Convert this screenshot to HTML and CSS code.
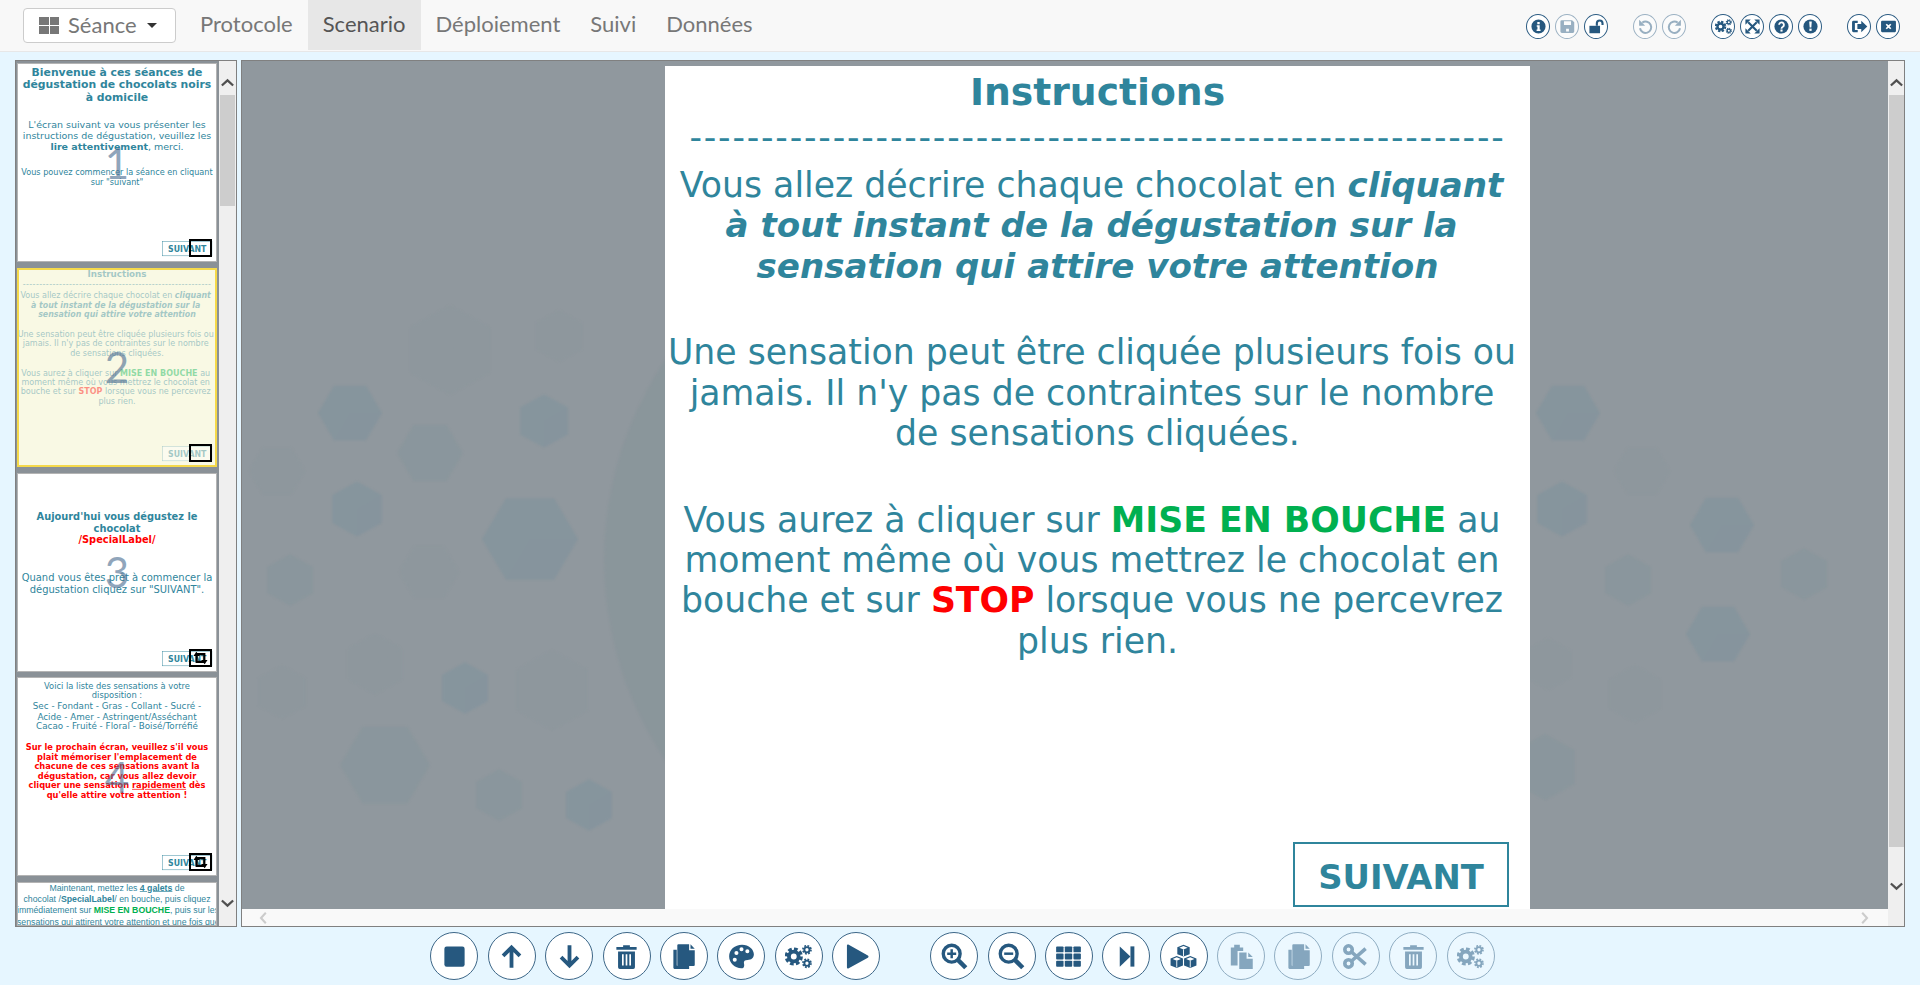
FILE: index.html
```html
<!DOCTYPE html>
<html lang="fr">
<head>
  <meta charset="UTF-8" />
  <title>Scenario</title>
  <link rel="stylesheet" href="styles.css">
</head>
<body>

  <svg class="defs" width="0" height="0">
    <defs>
      <symbol id="i-info" viewBox="0 0 24 24"><path fill-rule="evenodd" d="M12 2a10 10 0 1 0 0 20a10 10 0 1 0 0-20z M10.3 5.500h3.400v3.200h-3.400z M9.500 10.200h4.200v6.200h1.200v2h-5.600v-2h1.200v-4.200h-1z"/></symbol>
      <symbol id="i-save" viewBox="0 0 24 24"><path fill-rule="evenodd" d="M4 3h14.500l3 3v13a2 2 0 0 1-2 2h-15.500a2 2 0 0 1-2-2v-14a2 2 0 0 1 2-2z M7 4.500v5.500h10v-5.500z M10 15v4h4v-4z"/></symbol>
      <symbol id="i-unlock" viewBox="0 0 24 24"><path d="M2 11h15v10.500h-15z"/><path d="M12.500 11v-3.500a4 4 0 0 1 8 0v2.500" fill="none" stroke="currentColor" stroke-width="3"/></symbol>
      <symbol id="i-undo" viewBox="0 0 24 24"><path d="M7.500 6.500a8 8 0 1 1-3.300 8" fill="none" stroke="currentColor" stroke-width="2.800"/><path d="M3 2.500v8.500h8.500z"/></symbol>
      <symbol id="i-redo" viewBox="0 0 24 24"><path d="M16.500 6.500a8 8 0 1 0 3.300 8" fill="none" stroke="currentColor" stroke-width="2.800"/><path d="M21 2.500v8.500h-8.500z"/></symbol>
      <symbol id="i-cogs" viewBox="0 0 24 24">
        <g fill="none" stroke="currentColor">
          <circle cx="7.800" cy="12" r="4.300" stroke-width="3.400"/>
          <circle cx="7.800" cy="12" r="6.700" stroke-width="2.800" stroke-dasharray="3.300 1.960"/>
          <circle cx="19.500" cy="6" r="2.300" stroke-width="1.700"/>
          <circle cx="19.500" cy="6" r="3.600" stroke-width="1.500" stroke-dasharray="1.600 1.230"/>
          <circle cx="19.500" cy="18" r="2.300" stroke-width="1.700"/>
          <circle cx="19.500" cy="18" r="3.600" stroke-width="1.500" stroke-dasharray="1.600 1.230"/>
        </g>
      </symbol>
      <symbol id="i-full" viewBox="0 0 24 24"><path d="M6 6l12 12M18 6l-12 12" stroke="currentColor" stroke-width="3" fill="none"/><path d="M2 2h7.500l-7.500 7.500z M22 2h-7.500l7.500 7.500z M2 22h7.500l-7.500-7.500z M22 22h-7.500l7.500-7.500z"/></symbol>
      <symbol id="i-help" viewBox="0 0 24 24"><circle cx="12" cy="12" r="10"/><path d="M8.600 9.500a3.400 3.400 0 1 1 5.300 2.900c-1.300.8-1.900 1.300-1.900 2.600" fill="none" stroke="#fff" stroke-width="2.600"/><rect x="10.500" y="16.200" width="3" height="3" fill="#fff"/></symbol>
      <symbol id="i-warn" viewBox="0 0 24 24"><circle cx="12" cy="12" r="10"/><path d="M10.200 5h3.600l-.6 8.500h-2.400z" fill="#fff"/><rect x="10.400" y="15" width="3.200" height="3.200" fill="#fff"/></symbol>
      <symbol id="i-logout" viewBox="0 0 24 24"><path d="M3.500 4h6v3h-4v10h4v3h-6a2 2 0 0 1-2-2v-12a2 2 0 0 1 2-2z"/><path d="M9 8.500h5.500v-4.500l8.500 8-8.500 8v-4.500h-5.500z"/></symbol>
      <symbol id="i-close" viewBox="0 0 24 24"><path fill-rule="evenodd" d="M3 4h18a1.500 1.500 0 0 1 1.500 1.500v13a1.500 1.500 0 0 1-1.500 1.500h-18a1.500 1.500 0 0 1-1.500-1.500v-13a1.500 1.500 0 0 1 1.500-1.500z M9.600 8l-1.600 1.600 2.400 2.400-2.400 2.400 1.600 1.600 2.400-2.400 2.400 2.400 1.600-1.600-2.400-2.400 2.400-2.400-1.600-1.600-2.400 2.400z"/></symbol>
      <symbol id="i-stop" viewBox="0 0 24 24"><rect x="3" y="3" width="18" height="18" rx="2"/></symbol>
      <symbol id="i-up" viewBox="0 0 24 24"><path d="M12 22v-17M4.500 11.500l7.500-7.500 7.500 7.500" fill="none" stroke="currentColor" stroke-width="3.400"/></symbol>
      <symbol id="i-down" viewBox="0 0 24 24"><path d="M12 2v17M4.500 12.500l7.500 7.500 7.500-7.500" fill="none" stroke="currentColor" stroke-width="3.400"/></symbol>
      <symbol id="i-trash" viewBox="0 0 24 24"><path d="M3 3.500h6v-1.500h6v1.500h6v2.500h-18z"/><path fill-rule="evenodd" d="M4.500 7.500h15v14a1.500 1.500 0 0 1-1.500 1.500h-12a1.500 1.500 0 0 1-1.500-1.500z M8 10v10h1.500v-10z M11.250 10v10h1.500v-10z M14.500 10v10h1.500v-10z"/></symbol>
      <symbol id="i-copy" viewBox="0 0 24 24"><path d="M3 6h3v14h11v3h-13a1 1 0 0 1-1-1z"/><path d="M7.500 1h9.500v5.500h5v13a1 1 0 0 1-1 1h-13.500a1 1 0 0 1-1-1v-17.500a1 1 0 0 1 1-1z"/><path d="M18.200 1l3.800 4.200h-3.800z"/></symbol>
      <symbol id="i-palette" viewBox="0 0 24 24"><path fill-rule="evenodd" d="M12.500 1.500c6 0 10.500 4 10.500 8.500 0 3.500-2.500 5-5.500 5-2.500 0-3.800 1-3.300 3.200.5 2 .2 4.300-2.200 4.300-6 0-11-4.800-11-10.700 0-5.800 5-10.300 11.500-10.300z M7.500 7a1.800 1.800 0 1 0 0 3.600a1.800 1.800 0 1 0 0-3.600z M12 3.800a1.800 1.800 0 1 0 0 3.600a1.800 1.800 0 1 0 0-3.600z M17.200 5.500a1.800 1.800 0 1 0 0 3.600a1.800 1.800 0 1 0 0-3.600z M6 13a1.800 1.800 0 1 0 0 3.600a1.800 1.800 0 1 0 0-3.600z"/></symbol>
      <symbol id="i-play" viewBox="0 0 24 24"><path d="M3.500 2.500c0-1 .8-1.300 1.600-.9l17 9.400c.8.500.8 1.500 0 2l-17 9.400c-.8.400-1.600.1-1.600-.9z"/></symbol>
      <symbol id="i-zoomin" viewBox="0 0 24 24"><circle cx="9.500" cy="9.500" r="7.500" fill="none" stroke="currentColor" stroke-width="3"/><path d="M15 15l7 7" stroke="currentColor" stroke-width="4"/><path d="M9.500 5.500v8M5.500 9.500h8" stroke="currentColor" stroke-width="2.200"/></symbol>
      <symbol id="i-zoomout" viewBox="0 0 24 24"><circle cx="9.500" cy="9.500" r="7.500" fill="none" stroke="currentColor" stroke-width="3"/><path d="M15 15l7 7" stroke="currentColor" stroke-width="4"/><path d="M5.500 9.500h8" stroke="currentColor" stroke-width="2.200"/></symbol>
      <symbol id="i-grid" viewBox="0 0 24 24"><g><rect x="1" y="3" width="6.600" height="5.300" rx=".8"/><rect x="8.700" y="3" width="6.600" height="5.300" rx=".8"/><rect x="16.400" y="3" width="6.600" height="5.300" rx=".8"/><rect x="1" y="9.350" width="6.600" height="5.300" rx=".8"/><rect x="8.700" y="9.350" width="6.600" height="5.300" rx=".8"/><rect x="16.400" y="9.350" width="6.600" height="5.300" rx=".8"/><rect x="1" y="15.700" width="6.600" height="5.300" rx=".8"/><rect x="8.700" y="15.700" width="6.600" height="5.300" rx=".8"/><rect x="16.400" y="15.700" width="6.600" height="5.300" rx=".8"/></g></symbol>
      <symbol id="i-end" viewBox="0 0 24 24"><path d="M6 3l9.500 9-9.500 9z"/><path d="M15.500 3h3.500v18h-3.500z"/></symbol>
      <symbol id="i-cubes" viewBox="0 0 24 24">
        <path d="M12 1.500l5.500 2.200v6.200l-5.500 2.200-5.500-2.200v-6.200z M6 11.500l5.500 2.200v6.200l-5.500 2.400-5.500-2.400v-6.200z M18 11.500l5.500 2.200v6.200l-5.500 2.400-5.500-2.400v-6.200z"/>
        <path d="M12 2.700l3.700 1.500-3.700 1.500-3.700-1.500z M6 12.700l3.700 1.500-3.700 1.500-3.700-1.500z M18 12.700l3.700 1.500-3.700 1.500-3.700-1.500z" fill="#fff"/>
        <path d="M12 5.700v6M6 15.700v6M18 15.700v6" fill="none" stroke="#fff" stroke-width=".8"/>
      </symbol>
      <symbol id="i-paste" viewBox="0 0 24 24"><path d="M2.500 4h3v-2.500h5v2.500h3v3h-5v13h-6z"/><path d="M10 8.500h6.500v5.500h5.500v9h-12z"/><path d="M18 8.500l4 4h-4z"/></symbol>
      <symbol id="i-cut" viewBox="0 0 24 24"><g fill="none" stroke="currentColor" stroke-width="3.200"><circle cx="5.800" cy="5.800" r="3.300"/><circle cx="5.800" cy="18.200" r="3.300"/><path d="M8.500 8l12.500 11M8.500 16l12.500-11"/></g></symbol>
      <symbol id="i-retweet" viewBox="0 0 24 20"><path d="M6 1l5 6h-3v7h8l3 3h-14v-10h-3z M18 19l-5-6h3v-7h-8l-3-3h14v10h3z"/></symbol>
      <symbol id="i-chev-up" viewBox="0 0 15 10"><path d="M1 8.500l6.500-6 6.500 6" fill="none" stroke="currentColor" stroke-width="2.600"/></symbol>
      <symbol id="i-chev-down" viewBox="0 0 15 10"><path d="M1 1.500l6.500 6 6.500-6" fill="none" stroke="currentColor" stroke-width="2.600"/></symbol>
      <symbol id="i-chev-left" viewBox="0 0 10 15"><path d="M8.500 1l-6 6.500 6 6.500" fill="none" stroke="currentColor" stroke-width="2.600"/></symbol>
      <symbol id="i-chev-right" viewBox="0 0 10 15"><path d="M1.500 1l6 6.500-6 6.500" fill="none" stroke="currentColor" stroke-width="2.600"/></symbol>
      <symbol id="hex" viewBox="-1 -1 2 2" overflow="visible">
        <path d="M-.5-.85L.5-.85 1 0 .5.85-.5.85-1 0z"/>
        <path d="M0 0L1 0 .5.85-.5.85z" opacity=".4"/>
      </symbol>
      <symbol id="hex-b" viewBox="-1 -1 2 2" overflow="visible">
        <path d="M0-.95L.85-.48 .85.48 0 .95-.85.48-.85-.48z"/>
        <path d="M0 0L.85-.48 .85.48 0 .95z" opacity=".4"/>
      </symbol>
    </defs>
  </svg>

  <!-- top bar -->
  <header class="topbar">
    <button class="session-btn">
      <span class="session-grid"><i></i><i></i><i></i><i></i></span>
      Séance
      <span class="caret"></span>
    </button>
    <nav class="tabs">
      <a>Protocole</a>
      <a class="active">Scenario</a>
      <a>Déploiement</a>
      <a>Suivi</a>
      <a>Données</a>
    </nav>
    <div class="top-tools">
      <div class="tool-group">
        <span class="tool"><svg><use href="#i-info"/></svg></span>
        <span class="tool off"><svg><use href="#i-save"/></svg></span>
        <span class="tool"><svg><use href="#i-unlock"/></svg></span>
      </div>
      <div class="tool-group">
        <span class="tool off"><svg><use href="#i-undo"/></svg></span>
        <span class="tool off"><svg><use href="#i-redo"/></svg></span>
      </div>
      <div class="tool-group">
        <span class="tool"><svg><use href="#i-cogs"/></svg></span>
        <span class="tool"><svg><use href="#i-full"/></svg></span>
        <span class="tool"><svg><use href="#i-help"/></svg></span>
        <span class="tool"><svg><use href="#i-warn"/></svg></span>
      </div>
      <div class="tool-group">
        <span class="tool"><svg><use href="#i-logout"/></svg></span>
        <span class="tool"><svg><use href="#i-close"/></svg></span>
      </div>
    </div>
  </header>

  <div class="workspace">

    <!-- thumbnails -->
    <aside class="rail">
      <div class="thumbs">

        <div class="thumb">
          <div class="mini">
            <div class="slide s-welcome">
              <h3>Bienvenue à ces séances de<br>dégustation de chocolats noirs<br>à domicile</h3>
              <p class="big">L'écran suivant va vous présenter les<br>instructions de dégustation, veuillez les<br><b>lire attentivement</b>, merci.</p>
              <p class="small">Vous pouvez commencer la séance en cliquant<br>sur "suivant"</p>
              <div class="next">SUIVANT</div>
            </div>
          </div>
          <span class="thumb-num">1</span>
          <span class="thumb-flag"></span>
        </div>

        <div class="thumb selected">
          <div class="mini">
            <div class="slide s-main">
              <h2>Instructions</h2>
              <div class="dashes">---------------------------------------------------------</div>
              <p>Vous allez décrire chaque chocolat en <b><i>cliquant&nbsp;<br>à tout instant de la dégustation sur la&nbsp;<br>sensation qui attire votre attention</i></b></p>
              <p>Une sensation peut être cliquée plusieurs fois ou&nbsp;<br>jamais. Il n'y pas de contraintes sur le nombre&nbsp;<br>de sensations cliquées.</p>
              <p>Vous aurez à cliquer sur <b class="green">MISE EN BOUCHE</b> au&nbsp;<br>moment même où vous mettrez le chocolat en&nbsp;<br>bouche et sur <b class="red">STOP</b> lorsque vous ne percevrez&nbsp;<br>plus rien.</p>
              <div class="next">SUIVANT</div>
            </div>
          </div>
          <span class="thumb-num">2</span>
          <span class="thumb-flag"></span>
        </div>

        <div class="thumb">
          <div class="mini">
            <div class="slide s-today">
              <h3>Aujourd'hui vous dégustez le<br>chocolat<br><span class="red">/SpecialLabel/</span></h3>
              <p>Quand vous êtes prêt à commencer la<br>dégustation cliquez sur "SUIVANT".</p>
              <div class="next">SUIVANT</div>
            </div>
          </div>
          <span class="thumb-num">3</span>
          <span class="thumb-flag"><svg><use href="#i-retweet"/></svg></span>
        </div>

        <div class="thumb">
          <div class="mini">
            <div class="slide s-list">
              <p class="intro">Voici la liste des sensations à votre<br>disposition :</p>
              <p class="words">Sec - Fondant - Gras - Collant - Sucré -<br>Acide - Amer - Astringent/Asséchant<br>Cacao - Fruité - Floral - Boisé/Torréfié</p>
              <p class="warning">Sur le prochain écran, veuillez s'il vous<br>plait mémoriser l'emplacement de<br>chacune de ces sensations avant la<br>dégustation, car vous allez devoir<br>cliquer une sensation <u>rapidement</u> dès<br>qu'elle attire votre attention !</p>
              <div class="next">SUIVANT</div>
            </div>
          </div>
          <span class="thumb-num">4</span>
          <span class="thumb-flag"><svg><use href="#i-retweet"/></svg></span>
        </div>

        <div class="thumb">
          <div class="mini">
            <div class="slide s-last">
              <p>Maintenant, mettez les <u><b>4 galets</b></u> de<br>chocolat /<b>SpecialLabel</b>/ en bouche, puis cliquez<br>immédiatement sur <b class="green">MISE EN BOUCHE</b>, puis sur les<br>sensations qui attirent votre attention et une fois que</p>
            </div>
          </div>
        </div>

      </div>
      <div class="vbar">
        <svg class="chev"><use href="#i-chev-up"/></svg>
        <div class="vbar-thumb rail-thumb"></div>
        <svg class="chev chev-end"><use href="#i-chev-down"/></svg>
      </div>
    </aside>

    <!-- main slide -->
    <main class="stage">
      <div class="canvas">
        <svg class="backdrop" viewBox="242 61 1646 848">
          <circle class="arc" cx="962" cy="560" r="358"/>
          <g class="hex-strong">
            <use href="#hex" x="318" y="381" width="64" height="64"/>
            <use href="#hex-b" x="516" y="393" width="56" height="56"/>
            <use href="#hex-b" x="328" y="480" width="58" height="58"/>
            <use href="#hex" x="482" y="491" width="96" height="96"/>
            <use href="#hex-b" x="438" y="661" width="54" height="54"/>
            <use href="#hex-b" x="562" y="778" width="54" height="54"/>
            <use href="#hex" x="1536" y="381" width="64" height="64"/>
            <use href="#hex-b" x="1533" y="480" width="58" height="58"/>
            <use href="#hex" x="1690" y="493" width="64" height="64"/>
            <use href="#hex" x="1686" y="602" width="64" height="64"/>
          </g>
          <g class="hex-mid">
            <use href="#hex-b" x="263" y="553" width="54" height="54"/>
            <use href="#hex" x="397" y="420" width="66" height="66"/>
            <use href="#hex" x="340" y="720" width="90" height="90"/>
            <use href="#hex-b" x="472" y="768" width="54" height="54"/>
            <use href="#hex-b" x="1601" y="553" width="54" height="54"/>
            <use href="#hex-b" x="1777" y="547" width="54" height="54"/>
            <use href="#hex-b" x="1510" y="732" width="70" height="70"/>
          </g>
          <g class="hex-faint">
            <use href="#hex-b" x="403" y="303" width="94" height="94"/>
            <use href="#hex-b" x="532" y="309" width="54" height="54"/>
            <use href="#hex" x="249" y="443" width="56" height="56"/>
            <use href="#hex" x="399" y="542" width="60" height="60"/>
            <use href="#hex-b" x="343" y="632" width="64" height="64"/>
            <use href="#hex-b" x="254" y="664" width="56" height="56"/>
            <use href="#hex-b" x="510" y="648" width="84" height="84"/>
            <use href="#hex" x="1614" y="443" width="56" height="56"/>
            <use href="#hex-b" x="1521" y="637" width="54" height="54"/>
            <use href="#hex-b" x="1605" y="664" width="60" height="60"/>
          </g>
        </svg>
        <div class="slide s-main on-stage">
          <h2>Instructions</h2>
          <div class="dashes">---------------------------------------------------------</div>
          <p>Vous allez décrire chaque chocolat en <b><i>cliquant&nbsp;<br>à tout instant de la dégustation sur la&nbsp;<br>sensation qui attire votre attention</i></b></p>
          <p>Une sensation peut être cliquée plusieurs fois ou&nbsp;<br>jamais. Il n'y pas de contraintes sur le nombre&nbsp;<br>de sensations cliquées.</p>
          <p>Vous aurez à cliquer sur <b class="green">MISE EN BOUCHE</b> au&nbsp;<br>moment même où vous mettrez le chocolat en&nbsp;<br>bouche et sur <b class="red">STOP</b> lorsque vous ne percevrez&nbsp;<br>plus rien.</p>
          <div class="next">SUIVANT</div>
        </div>
      </div>
      <div class="vbar">
        <svg class="chev"><use href="#i-chev-up"/></svg>
        <div class="vbar-thumb stage-thumb"></div>
        <svg class="chev chev-end"><use href="#i-chev-down"/></svg>
      </div>
      <div class="hbar">
        <svg class="chev-h"><use href="#i-chev-left"/></svg>
        <svg class="chev-h"><use href="#i-chev-right"/></svg>
      </div>
      <div class="corner"></div>
    </main>
  </div>

  <!-- bottom toolbar -->
  <footer class="bottombar">
    <div class="tool-row">
      <span class="round"><svg><use href="#i-stop"/></svg></span>
      <span class="round"><svg><use href="#i-up"/></svg></span>
      <span class="round"><svg><use href="#i-down"/></svg></span>
      <span class="round"><svg><use href="#i-trash"/></svg></span>
      <span class="round"><svg><use href="#i-copy"/></svg></span>
      <span class="round"><svg><use href="#i-palette"/></svg></span>
      <span class="round"><svg><use href="#i-cogs"/></svg></span>
      <span class="round"><svg><use href="#i-play"/></svg></span>
    </div>
    <div class="tool-row">
      <span class="round"><svg><use href="#i-zoomin"/></svg></span>
      <span class="round"><svg><use href="#i-zoomout"/></svg></span>
      <span class="round"><svg><use href="#i-grid"/></svg></span>
      <span class="round"><svg><use href="#i-end"/></svg></span>
      <span class="round"><svg><use href="#i-cubes"/></svg></span>
      <span class="round off"><svg><use href="#i-paste"/></svg></span>
      <span class="round off"><svg><use href="#i-copy"/></svg></span>
      <span class="round off"><svg><use href="#i-cut"/></svg></span>
      <span class="round off"><svg><use href="#i-trash"/></svg></span>
      <span class="round off"><svg><use href="#i-cogs"/></svg></span>
    </div>
  </footer>

</body>
</html>
```

FILE: styles.css
```css
* { box-sizing: border-box; }
html, body { height: 100%; }
body { margin: 0; height: 985px; overflow: hidden; display: flex; flex-direction: column; background: #e6f6ff; font-family: "Lato", sans-serif; color: #26587f; }
p, h2, h3 { margin: 0; }
svg { fill: currentColor; display: block; }
.defs { position: absolute; }

/* top bar */
.topbar { height: 52px; flex: none; display: flex; align-items: flex-start; background: #f8f8f8; border-bottom: 1px solid #e7e7e7; padding-left: 23px; padding-right: 20px; }
.session-btn { width: 153px; height: 35px; margin-top: 8px; margin-right: 9px; padding: 0 0 3px 15px; display: flex; align-items: center; background: #fff; border: 1px solid #ccc; border-radius: 4px; font-family: inherit; font-size: 22px; color: #777; }
.session-grid { width: 20px; height: 17px; margin-top: 3px; margin-right: 9px; display: grid; grid-template-columns: 1fr 1fr; gap: 1px; }
.session-grid i { background: #777; }
.caret { margin-left: 10px; margin-top: 3px; border-top: 5px solid #333; border-left: 5px solid transparent; border-right: 5px solid transparent; }
.tabs { display: flex; }
.tabs a { height: 50px; padding: 0 15px; line-height: 48px; font-size: 22px; color: #777; }
.tabs a.active { background: #e7e7e7; color: #555; }
.top-tools { margin-left: auto; margin-top: 14px; display: flex; gap: 25px; }
.tool-group { display: flex; gap: 5px; }
.tool { width: 24px; height: 25px; display: flex; align-items: center; justify-content: center; background: #fff; border: 1px solid #2c5c83; border-radius: 50%; color: #26587f; }
.tool svg { width: 17px; height: 17px; }
.tool.off { opacity: .45; }

/* workspace */
.workspace { height: 867px; flex: none; margin-top: 8px; padding: 0 15px; display: flex; gap: 4px; }

.rail { width: 222px; flex: none; display: flex; border: 1px solid #808080; background: #efefef; overflow: hidden; }
.thumbs { width: 203px; flex: none; padding: 2px 2px 0 1px; display: flex; flex-direction: column; gap: 5.75px; background: #8a9197; overflow: hidden; }
.thumb { width: 200px; height: 199px; flex: none; position: relative; overflow: hidden; background: #fff; }
.thumb::after { content: ""; position: absolute; inset: 0; border: 1px solid #b4b4b4; }
.thumb.selected { background: #f9f9e4; }
.thumb.selected::after { border: 2px solid #f5d94a; }
.thumb.selected .slide { background: transparent; opacity: .42; }
.thumb:last-child { height: 44px; }
.mini { width: 865px; height: 857px; transform: scale(.2312); transform-origin: 0 0; }
.mini .next { top: 770px; }
.thumb-num { position: absolute; inset: 0; display: flex; align-items: center; justify-content: center; font-size: 42px; color: #4d6f92; opacity: .62; }
.thumb-flag { position: absolute; right: 5px; bottom: 5px; width: 23px; height: 18px; border: 2px solid #000; display: flex; align-items: center; justify-content: center; color: #000; }
.thumb-flag svg { width: 19px; height: 14px; }

/* scrollbars */
.vbar { display: flex; flex-direction: column; align-items: center; width: 100%; background: #efefef; }
.rail .vbar { width: 17px; }
.chev { width: 13px; height: 9px; margin-top: 17px; color: #505050; flex: none; }
.chev-end { margin-top: auto; margin-bottom: 18px; }
.vbar-thumb { width: 15px; margin-top: 8px; background: #cdcdcd; flex: none; }
.rail-thumb { height: 111px; }
.stage-thumb { height: 752px; }
.hbar { background: #f9f9f9; display: flex; justify-content: space-between; align-items: center; padding: 0 18px 0 16px; color: #ccc; }
.chev-h { width: 10px; height: 12px; }
.corner { background: #efefef; }

/* main stage */
.stage { flex: 1; display: grid; grid-template-columns: 1fr 16px; grid-template-rows: 848px 17px; border: 1px solid #808080; background: #efefef; }
.canvas { position: relative; overflow: hidden; background: #90989e; }
.backdrop { position: absolute; inset: 0; width: 100%; height: 100%; filter: blur(1px); }
.arc { fill: #87949a; opacity: .6; }
.hex-strong { fill: #7c929d; opacity: .5; }
.hex-mid { fill: #7f939b; opacity: .32; }
.hex-faint { fill: #85959b; opacity: .2; }
.on-stage { margin-left: 423px; margin-top: 5px; }

/* slides */
.slide { position: relative; width: 865px; height: 857px; background: #fff; text-align: center; color: #2f859c; font-family: "DejaVu Sans", sans-serif; white-space: nowrap; }
.next { position: absolute; left: 628px; top: 776px; width: 216px; height: 65px; padding-top: 9px; border: 2px solid #2f859c; background: #fff; font-size: 33.800px; line-height: 50px; font-weight: bold; }
.green { color: #00b050; }
.red { color: #f00; }

.s-main { font-size: 34.700px; line-height: 40.300px; }
.s-main h2 { padding-top: 1px; height: 50px; font-size: 37.700px; line-height: 50px; font-weight: bold; }
.s-main .dashes { height: 49px; letter-spacing: 1.800px; line-height: 42px; }
.s-main p { margin-bottom: 46.500px; }
.s-main i { font-size: 34.100px; }

.s-welcome { padding-top: 12px; }
.s-welcome h3 { font-size: 46.800px; line-height: 55px; }
.s-welcome .big { margin-top: 67px; font-size: 41px; line-height: 47.500px; }
.s-welcome .small { margin-top: 62px; font-size: 35.200px; line-height: 43px; }

.s-today { padding-top: 165px; }
.s-today h3 { font-size: 42.500px; line-height: 50px; }
.s-today p { margin-top: 115px; font-size: 43px; line-height: 48px; }

.s-list { padding-top: 20px; font-size: 36px; line-height: 40px; }
.s-list .words { margin-top: 6px; font-size: 38px; line-height: 43.500px; }
.s-list .warning { margin-top: 46px; font-size: 35.800px; font-weight: bold; color: #f00; line-height: 41.500px; }

.s-last { padding-top: 0; font-family: "Liberation Sans", sans-serif; font-size: 37.800px; line-height: 49px; }

/* bottom toolbar */
.bottombar { flex: 1; padding: 5px 0 0 5px; display: flex; justify-content: center; gap: 50px; }
.tool-row { display: flex; gap: 9.400px; }
.round { width: 48px; height: 48px; display: flex; align-items: center; justify-content: center; background: #fff; border: 1px solid #3d6788; border-radius: 50%; color: #26587f; }
.round svg { width: 27px; height: 27px; }
.round.off { background: #f3fbff; opacity: .5; }
```
